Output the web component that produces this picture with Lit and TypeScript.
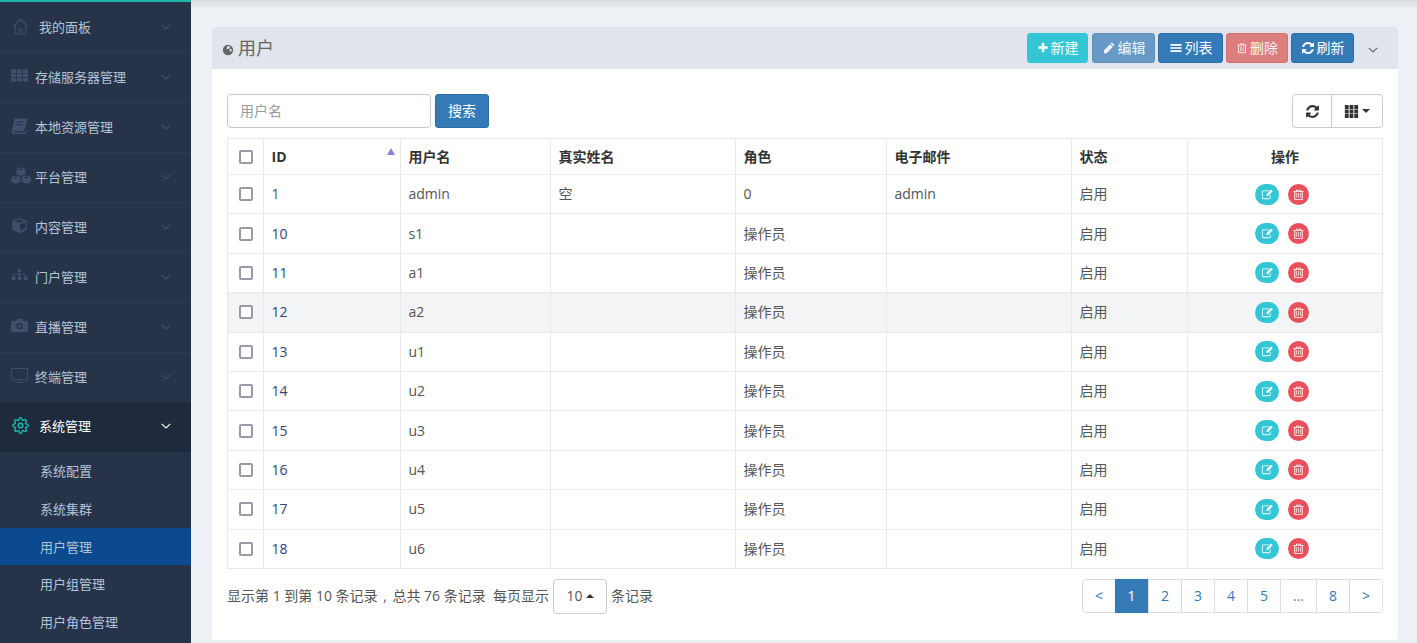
import { LitElement, html, css, svg } from 'lit';
import { customElement } from 'lit/decorators.js';

const fa = (d: unknown, cls = '') => html`<svg class="fa ${cls}" viewBox="0 0 1792 1792" fill="currentColor">${d}</svg>`;
const REFRESH = svg`<path d="M1639 1056q0 5-1 7-64 268-268 434.5t-478 166.5q-146 0-282.5-55t-243.5-157l-129 129q-19 19-45 19t-45-19-19-45v-448q0-26 19-45t45-19h448q26 0 45 19t19 45-19 45l-137 137q71 66 161 102t187 36q134 0 250-65t186-179q11-17 53-117 8-23 30-23h192q13 0 22.5 9.5t9.5 22.5zm25-800v448q0 26-19 45t-45 19h-448q-26 0-45-19t-19-45 19-45l138-138q-148-137-349-137-134 0-250 65t-186 179q-11 17-53 117-8 23-30 23h-199q-13 0-22.5-9.5t-9.5-22.5v-7q65-268 270-434.5t480-166.5q146 0 284 55.5t245 156.5l130-129q19-19 45-19t45 19 19 45z"/>`;
const PLUS = svg`<path d="M1600 736v192q0 40-28 68t-68 28h-416v416q0 40-28 68t-68 28h-192q-40 0-68-28t-28-68v-416h-416q-40 0-68-28t-28-68v-192q0-40 28-68t68-28h416v-416q0-40 28-68t68-28h192q40 0 68 28t28 68v416h416q40 0 68 28t28 68z"/>`;
const PENCIL = svg`<path d="M1300 220l272 272q38 38 0 76l-110 110-348-348 110-110q38-38 76 0zM1030 414l348 348-790 790H240v-348z"/>`;
const LIST = svg`<path d="M60 300h1672v250H60zM60 771h1672v250H60zM60 1242h1672v250H60z"/>`;
const TRASH = svg`<path fill-rule="evenodd" d="M640 224h512q40 0 68 40l60 136h320v128h-128v1000q0 136-112 136H432q-112 0-112-136V528H192V400h320l60-136q28-40 68-40zM660 400h472l-44-72H704zM448 528v976q0 32 24 32h848q24 0 24-32V528zM600 704h96v640h-96zM848 704h96v640h-96zM1096 704h96v640h-96z"/>`;
const EDIT = svg`<path fill-rule="evenodd" d="M300 340h860v110H300q-60 0-60 60v860q0 60 60 60h860q60 0 60-60v-300l110-110v420q0 160-170 160H300q-170 0-170-160V510q0-170 170-170z"/><path d="M1440 240l170 170q24 24 0 48L980 1090H760V870l632-630q24-24 48 0z"/>`;
const GRID = svg`<path d="M100 130h460v460H100zM666 130h460v460H666zM1232 130h460v460h-460zM100 666h460v460H100zM666 666h460v460H666zM1232 666h460v460h-460zM100 1202h460v460H100zM666 1202h460v460H666zM1232 1202h460v460h-460z"/>`;
const GLOBE = svg`<path fill-rule="evenodd" d="M896 128a768 768 0 1 0 0 1536 768 768 0 0 0 0-1536zM960 300q200 30 340 150l-100 80-130-30-60 120 140 140 200-40 100 120q0 200-130 350l-140-160-40-200-200-120-200 60-60-200 120-190z"/>`;

const ICONS: Record<string, unknown> = {
  home: html`<svg class="nav-ico home" viewBox="0 0 18 18" fill="none" stroke="currentColor" stroke-width="1.2"><path d="M1 9.5 9 1.5l8 8M3.5 7.5V17h4v-5h3v5h4V7.5"/></svg>`,
  grid: fa(svg`<path d="M0 250h540v380H0zM626 250h540v380H626zM1252 250h540v380h-540zM0 700h540v380H0zM626 700h540v380H626zM1252 700h540v380h-540zM0 1150h540v380H0zM626 1150h540v380H626zM1252 1150h540v380h-540z"/>`, 'nav-ico'),
  book: fa(svg`<path d="M420 160h1240q90 0 60 100l-280 1140q-24 90-130 90H320q-60 0-60 70t70 70h1120q60 0 90-50l60-230 80 60-100 320q-30 70-130 70H260q-180 0-180-220 0-60 20-130L340 240q20-80 80-80zM600 480l-30 110h720l30-110zM520 760l-30 110h720l30-110z"/>`, 'nav-ico'),
  cubes: fa(svg`<path fill-rule="evenodd" d="M896 100l400 170v440l-400 170-400-170V270zM896 210L680 300l216 90 216-90zM430 820l400 170v440l-400 170-400-170V990zM430 930L214 1020l216 90 216-90zM1362 820l400 170v440l-400 170-400-170V990zM1362 930l-216 90 216 90 216-90z"/>`, 'nav-ico wide'),
  cube: fa(svg`<path fill-rule="evenodd" d="M896 100l760 300v960l-760 340-760-340V400zM896 240L380 440l516 200 516-200zM960 760v670l560-250V540z"/>`, 'nav-ico'),
  sitemap: fa(svg`<path d="M740 200h312v340H950v180h560q50 0 50 50v230h180v400h-400v-400h150v-180H950v180h150v400H692v-400h150v-180H330v180h150v400H52v-400h180V770q0-50 50-50h560V540H740z"/>`, 'nav-ico'),
  camera: fa(svg`<path fill-rule="evenodd" d="M640 200h512l120 200h320q200 0 200 160v900q0 130-200 130H200q-200 0-200-130V560q0-160 200-160h320zM896 620a340 340 0 1 0 0 680 340 340 0 0 0 0-680zM896 780a180 180 0 1 1 0 360 180 180 0 0 1 0-360z"/>`, 'nav-ico'),
  desktop: html`<svg class="nav-ico" viewBox="0 0 18 18" fill="none" stroke="currentColor" stroke-width="1.1"><rect x=".6" y="1.5" width="16.8" height="12" rx="1"/><path d="M9 13.5v2.5M5 16.5h8"/></svg>`,
  gear: html`<svg class="nav-ico home" viewBox="0 0 24 24" fill="none" stroke="currentColor" stroke-width="2"><circle cx="12" cy="12" r="3.2"/><path d="M19.4 15a1.65 1.65 0 0 0 .33 1.82l.06.06a2 2 0 1 1-2.83 2.83l-.06-.06a1.65 1.65 0 0 0-2.82 1.17V21a2 2 0 0 1-4 0v-.09a1.65 1.65 0 0 0-2.82-1.17l-.06.06a2 2 0 1 1-2.83-2.83l.06-.06A1.65 1.65 0 0 0 3.26 14H3a2 2 0 0 1 0-4h.09a1.65 1.65 0 0 0 1.17-2.82l-.06-.06a2 2 0 1 1 2.83-2.83l.06.06A1.65 1.65 0 0 0 10 3.09V3a2 2 0 0 1 4 0v.09a1.65 1.65 0 0 0 2.82 1.17l.06-.06a2 2 0 1 1 2.83 2.83l-.06.06A1.65 1.65 0 0 0 20.91 10H21a2 2 0 0 1 0 4h-.09a1.65 1.65 0 0 0-1.51 1z"/></svg>`,
};

const chevron = html`<svg class="chev" viewBox="0 0 10 6" fill="none" stroke="currentColor" stroke-width="1.1"><path d="M.7.8 5 5l4.3-4.2"/></svg>`;

const MENU = [
  { icon: 'home', label: '我的面板' },
  { icon: 'grid', label: '存储服务器管理' },
  { icon: 'book', label: '本地资源管理' },
  { icon: 'cubes', label: '平台管理' },
  { icon: 'cube', label: '内容管理' },
  { icon: 'sitemap', label: '门户管理' },
  { icon: 'camera', label: '直播管理' },
  { icon: 'desktop', label: '终端管理' },
];
const SUB = ['系统配置', '系统集群', '用户管理', '用户组管理', '用户角色管理'];
const ROWS = [
  ['1', 'admin', '空', '0', 'admin'],
  ...['s1', 'a1', 'a2', 'u1', 'u2', 'u3', 'u4', 'u5', 'u6'].map((n, i) => [String(10 + i), n, '', '操作员', '']),
];
const COLS = [36, 137, 150, 185, 151, 185, 116, 195];

@customElement('app-root')
export class AppRoot extends LitElement {
  static styles = css`
    :host {
      display: flex;
      height: 100vh;
      overflow: hidden;
      font-family: "Open Sans", "Noto Sans CJK SC", sans-serif;
      font-size: 14px;
      line-height: 20px;
      color: #555;
      background: #edf0f5;
    }
    .fa { width: 14px; height: 14px; flex: none; }

    .side { width: 191px; flex: none; background: #263349; border-top: 2px solid #1ab8ad; color: #b4c4d8; }
    .item { height: 50px; box-sizing: border-box; display: flex; align-items: center; padding: 0 20px 1px 11px; border-top: 1px solid #2b3a57; font-size: 13px; }
    .item:first-child { border-top: 0; padding-bottom: 0; }
    .nav-ico { width: 17px; height: 17px; color: #3f4f6c; flex: none; margin: -3px 7px 0 0; }
    .nav-ico.wide { width: 20px; height: 20px; margin-right: 4px; }
    .nav-ico.home { margin: -1px 10px 0 1px; }
    .item span { flex: 1; }
    .chev { width: 10px; height: 6px; color: #3f4f6c; flex: none; }
    .item.open { height: 50.4px; background: #1f2a3c; color: #fff; border-top: 0; padding-bottom: 2px; }
    .item.open .nav-ico { color: #1ab8ad; }
    .item.open .chev { color: #fff; }
    .sub { display: block; height: 37.6px; line-height: 38px; padding-left: 40px; font-size: 13px; }
    .sub.on { background: #0b4a8e; }

    .main { flex: 1; min-width: 0; padding: 27px 19px 3px 21px; background: linear-gradient(#d6d9de, #edf0f5 9px); }
    .panel { height: 100%; background: #fff; border-radius: 4px; display: flex; flex-direction: column; }
    .head { height: 42px; flex: none; background: #e0e4ec; border-radius: 4px 4px 0 0; display: flex; align-items: center; padding: 0 20px 0 10px; box-sizing: border-box; }
    .globe { width: 12px; height: 12px; color: #666; margin: 3px 4px 0 0; }
    .title { font-size: 18px; color: #666; flex: 1; }
    .btn { height: 30px; box-sizing: border-box; margin-left: 3px; display: inline-flex; align-items: center; justify-content: center; gap: 2px; color: #fff; font-size: 14px; border-radius: 3px; border: 1px solid #2e6da4; background: #337ab7; }
    .btn .fa { width: 12px; height: 12px; }
    .btn.add { width: 61px; margin-right: 1px; background: #33c6d4; border-color: #33c6d4; }
    .btn.off { width: 63px; opacity: .7; }
    .btn.off .fa { width: 14px; height: 14px; }
    .btn.list { width: 65px; }
    .btn.list .fa { width: 14px; }
    .btn.del { width: 62px; background: #d9534f; border-color: #d43f3a; opacity: .7; }
    .btn.ref { width: 63px; }
    .btn.ref .fa { width: 14px; height: 14px; }
    .collapse { width: 10px; height: 6px; color: #667; margin: 3px 0 0 14px; }

    .body { padding: 25px 15px 0; flex: 1; }
    .tools { display: flex; align-items: flex-start; height: 34px; margin-bottom: 10px; }
    .search { width: 204px; height: 34px; box-sizing: border-box; border: 1px solid #c2cad8; border-radius: 4px; padding: 6px 12px; color: #999; }
    .go { width: 54px; height: 34px; box-sizing: border-box; margin-left: 4px; background: #337ab7; border: 1px solid #2e6da4; border-radius: 3px; color: #fff; display: flex; align-items: center; justify-content: center; }
    .group { margin-left: auto; display: flex; height: 34px; box-sizing: border-box; border: 1px solid #ccc; border-radius: 4px; color: #333; }
    .group div { display: flex; align-items: center; justify-content: center; gap: 3px; }
    .group .a { width: 39px; border-right: 1px solid #ccc; box-sizing: border-box; }
    .group .b { width: 50px; }
    .group .fa { width: 15px; height: 15px; }
    .caret { width: 0; height: 0; border: 4px solid transparent; border-top-color: #333; border-bottom: 0; }

    table { width: 1156px; table-layout: fixed; border-collapse: collapse; }
    th, td { border: 1px solid #e7ebf0; padding: 0 7.5px; text-align: left; }
    th { height: 35px; font-weight: 700; color: #333; position: relative; }
    td { height: 38.4px; }
    th:last-child, td:last-child { text-align: center; }
    th:first-child, td:first-child { padding: 0 0 0 11px; }
    td.id { color: #2f4478; }
    tr.hover td { background: #f2f4f6; }
    input[type="checkbox"] { appearance: none; display: block; margin: 0; width: 14px; height: 14px; box-sizing: border-box; border: 2px solid #9a9aa6; border-radius: 2px; background: #fff; }
    .sort { position: absolute; right: 5px; top: 9px; width: 0; height: 0; border: 4.5px solid transparent; border-bottom: 7px solid #8484dc; border-top: 0; }
    .acts { display: flex; justify-content: center; gap: 9px; padding-right: 6px; }
    .round { height: 21px; width: 21px; border-radius: 11px; display: flex; align-items: center; justify-content: center; color: #fff; background: #e9505c; }
    .round.e { width: 24px; background: #33c6d4; }
    .round .fa { width: 13px; height: 13px; }

    .foot { display: flex; align-items: center; margin-top: 10px; height: 35px; color: #555; }
    .comma { margin: 0 2px; }
    .size { width: 54px; height: 35px; box-sizing: border-box; margin: 0 4px; border: 1px solid #ccc; border-radius: 4px; display: flex; align-items: center; justify-content: center; gap: 3px; }
    .up { width: 0; height: 0; border: 4px solid transparent; border-bottom-color: #333; border-top: 0; }
    .pages { margin-left: auto; align-self: flex-start; display: flex; height: 34px; box-sizing: border-box; border: 1px solid #ddd; border-radius: 4px; color: #337ab7; }
    .pages span { width: 33px; display: flex; align-items: center; justify-content: center; border-left: 1px solid #ddd; box-sizing: border-box; }
    .pages span:first-child { border-left: 0; width: 32px; }
    .pages span.wide { width: 36px; color: #5f7d9c; }
    .pages span.on { background: #337ab7; color: #fff; border-left: 0; margin-top: -1px; margin-bottom: -1px; }
  `;

  render() {
    return html`
      <nav class="side">
        ${MENU.map((m) => html`
          <div class="item">${ICONS[m.icon]}<span>${m.label}</span>${chevron}</div>`)}
        <div class="item open">${ICONS.gear}<span>系统管理</span>${chevron}</div>
        ${SUB.map((s, i) => html`<div class="sub ${i === 2 ? 'on' : ''}">${s}</div>`)}
      </nav>
      <main class="main">
        <section class="panel">
          <header class="head">
            ${fa(GLOBE, 'globe')}
            <div class="title">用户</div>
            <div class="btn add">${fa(PLUS)}新建</div>
            <div class="btn off">${fa(PENCIL)}编辑</div>
            <div class="btn list">${fa(LIST)}列表</div>
            <div class="btn del">${fa(TRASH)}删除</div>
            <div class="btn ref">${fa(REFRESH)}刷新</div>
            <svg class="collapse" viewBox="0 0 10 6" fill="none" stroke="currentColor" stroke-width="1.1"><path d="M.7.8 5 5l4.3-4.2"/></svg>
          </header>
          <div class="body">
            <div class="tools">
              <div class="search">用户名</div>
              <div class="go">搜索</div>
              <div class="group">
                <div class="a">${fa(REFRESH)}</div>
                <div class="b">${fa(GRID)}<i class="caret"></i></div>
              </div>
            </div>
            <table>
              <colgroup>${COLS.map((w) => html`<col style="width:${w}px" />`)}</colgroup>
              <thead>
                <tr>
                  <th><input type="checkbox" /></th>
                  <th>ID<i class="sort"></i></th>
                  <th>用户名</th>
                  <th>真实姓名</th>
                  <th>角色</th>
                  <th>电子邮件</th>
                  <th>状态</th>
                  <th>操作</th>
                </tr>
              </thead>
              <tbody>
                ${ROWS.map((r) => html`
                  <tr class="${r[0] === '12' ? 'hover' : ''}">
                    <td><input type="checkbox" /></td>
                    <td class="${r[0] === '1' ? '' : 'id'}">${r[0]}</td>
                    <td>${r[1]}</td>
                    <td>${r[2]}</td>
                    <td>${r[3]}</td>
                    <td>${r[4]}</td>
                    <td>启用</td>
                    <td><div class="acts"><div class="round e">${fa(EDIT)}</div><div class="round">${fa(TRASH)}</div></div></td>
                  </tr>`)}
              </tbody>
            </table>
            <div class="foot">
              <span>显示第 1 到第 10 条记录 <span class="comma">,</span> 总共 76 条记录&nbsp;&nbsp;每页显示</span>
              <div class="size">10<i class="up"></i></div>
              <span>条记录</span>
              <div class="pages">
                ${['<', '1', '2', '3', '4', '5', '...', '8', '>'].map((p) => html`<span class="${p === '1' ? 'on' : p === '...' ? 'wide' : ''}">${p}</span>`)}
              </div>
            </div>
          </div>
        </section>
      </main>
    `;
  }
}
